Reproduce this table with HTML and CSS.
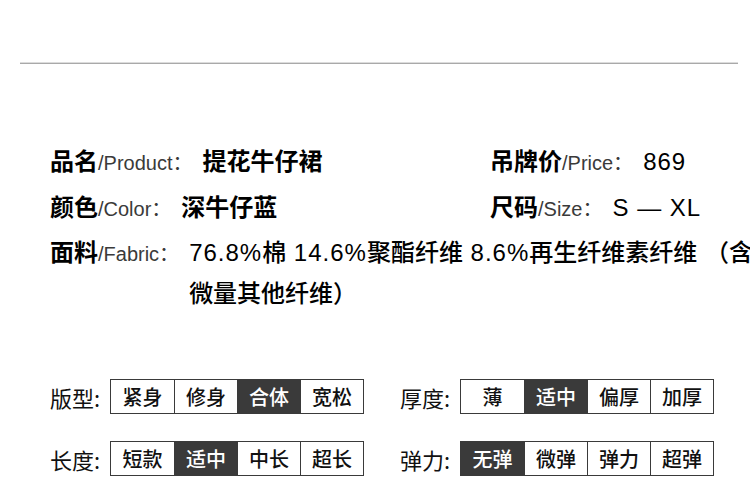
FILE: index.html
```html
<!DOCTYPE html>
<html lang="zh-CN">
<head>
<meta charset="utf-8">
<title>商品信息</title>
<link rel="stylesheet" href="styles.css">
</head>
<body>
<div class="page">
  <div class="rule"></div>

  <div class="info">
    <div class="row">
      <div class="item"><b class="k">品名</b><span class="en">/Product：</span><b class="v">提花牛仔裙</b></div>
      <div class="item"><b class="k">吊牌价</b><span class="en">/Price：</span><span class="v"><span class="lat">869</span></span></div>
    </div>
    <div class="row">
      <div class="item"><b class="k">颜色</b><span class="en">/Color：</span><b class="v">深牛仔蓝</b></div>
      <div class="item"><b class="k">尺码</b><span class="en">/Size：</span><span class="v"><span class="lat">S — XL</span></span></div>
    </div>
    <div class="fabric">
      <div class="fl"><b class="k">面料</b><span class="en">/Fabric：</span></div>
      <div class="fv"><span class="lat">76.8%</span>棉<span class="lat"> 14.6%</span>聚酯纤维<span class="lat"> 8.6%</span>再生纤维素纤维<span class="lat"> </span>（含<br>微量其他纤维）</div>
    </div>
  </div>

  <div class="opts">
    <div class="optrow">
      <div class="grp">
        <span class="gl">版型:</span>
        <div class="seg"><span>紧身</span><span>修身</span><span class="on">合体</span><span>宽松</span></div>
      </div>
      <div class="grp">
        <span class="gl">厚度:</span>
        <div class="seg"><span>薄</span><span class="on">适中</span><span>偏厚</span><span>加厚</span></div>
      </div>
    </div>
    <div class="optrow">
      <div class="grp">
        <span class="gl">长度:</span>
        <div class="seg"><span>短款</span><span class="on">适中</span><span>中长</span><span>超长</span></div>
      </div>
      <div class="grp">
        <span class="gl">弹力:</span>
        <div class="seg"><span class="on">无弹</span><span>微弹</span><span>弹力</span><span>超弹</span></div>
      </div>
    </div>
  </div>
</div>
</body>
</html>
```

FILE: styles.css
```css
html, body {
  margin: 0;
  padding: 0;
  background: #fff;
  overflow: hidden;
}

.page {
  width: 750px;
  height: 486px;
  overflow: hidden;
  font-family: "Liberation Sans", "Noto Sans CJK SC", sans-serif;
  color: #000;
}

.rule {
  margin: 62px 12px 0 20px;
  height: 1px;
  background: #a9a9a9;
  border-top: 1px solid #dcdcdc;
}

.info {
  margin-top: 75px;
  padding-left: 50px;
}

.row {
  display: flex;
}

.item {
  flex: none;
  width: 440px;
  height: 46px;
  line-height: 46px;
  white-space: nowrap;
}

.k {
  font-size: 24px;
  font-weight: bold;
}

.en {
  font-size: 20px;
  color: #3a3a3a;
}

.v {
  font-size: 24px;
  margin-left: 10px;
}

.lat {
  letter-spacing: 1px;
}

.fabric {
  display: flex;
  margin-top: 1px;
  line-height: 41px;
  white-space: nowrap;
}

.fl {
  flex: none;
}

.fv {
  flex: none;
  font-size: 24px;
  font-weight: 500;
  margin-left: 10px;
}

.opts {
  margin-top: 65px;
  padding-left: 50px;
  display: flex;
  flex-direction: column;
  gap: 27px;
}

.optrow {
  display: flex;
  gap: 36px;
}

.grp {
  display: flex;
  align-items: center;
}

.gl {
  width: 60px;
  font-size: 22px;
  font-weight: 400;
  color: #111;
  font-family: "Noto Sans CJK SC", sans-serif;
}

.seg {
  display: flex;
  border: 1px solid #3a3a3a;
}

.seg span {
  box-sizing: border-box;
  width: 63px;
  height: 33px;
  line-height: 33px;
  text-align: center;
  font-size: 20px;
  font-weight: 500;
  font-family: "Noto Sans CJK SC", sans-serif;
  color: #111;
  border-left: 1px solid #3a3a3a;
}

.seg span:first-child {
  border-left: none;
}

.seg span.on {
  background: #3a3a3a;
  color: #fff;
}
```
